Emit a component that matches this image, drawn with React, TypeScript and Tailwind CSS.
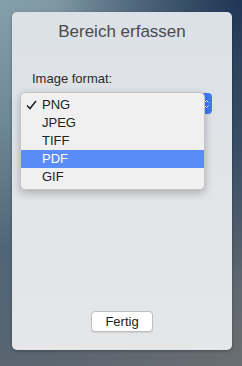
import React from "react";

export default function App() {
  const items = ["PNG", "JPEG", "TIFF", "PDF", "GIF"];
  return (
    <div
      className="w-[242px] h-[366px] overflow-hidden relative bg-[linear-gradient(150deg,#86a0aa_0%,#6e8794_25%,#4f6678_50%,#5a6570_75%,#6a6e72_100%)]"
      style={{ fontFamily: '"Liberation Sans", Arial, sans-serif' }}
    >
      <div className="absolute inset-0 bg-[radial-gradient(ellipse_at_100%_0%,#1f3554_0%,rgba(31,53,84,0)_55%)]" />
      <div className="relative pt-[12px] pl-[12px]">
        <div className="w-[220px] h-[338px] rounded-[5px] bg-[linear-gradient(180deg,#dce1e7_0%,#e2e4e7_50%,#e5e6e8_100%)] flex flex-col items-center shadow-[0_1px_3px_rgba(0,0,0,0.3)]">
          <div className="mt-[10px] text-[17px] leading-[20px] text-[#4a4a4a]">Bereich erfassen</div>
          <div className="self-start ml-[20px] mt-[29px] text-[13px] leading-[16px] text-[#2a2a2a]">Image format:</div>
          <div className="self-start relative mt-[5px] ml-[8px] w-[192px] h-[98px]">
            <div className="absolute right-0 top-[1px] w-[12px] h-[21px] rounded-r-[4px] bg-[#3f7cf2] flex flex-col items-center justify-center gap-[2px]">
              <svg width="5" height="3" viewBox="0 0 5 3"><path d="M0.5 2.5 L2.5 0.5 L4.5 2.5" stroke="white" strokeWidth="1" fill="none" /></svg>
              <svg width="5" height="3" viewBox="0 0 5 3"><path d="M0.5 0.5 L2.5 2.5 L4.5 0.5" stroke="white" strokeWidth="1" fill="none" /></svg>
            </div>
            <div className="absolute left-0 top-0 w-[185px] h-[98px] rounded-[5px] bg-[#f0f0f0] border border-[#c4c4c4] shadow-[0_3px_8px_rgba(0,0,0,0.25)] py-[3px]">
              {items.map((it) => (
                <div
                  key={it}
                  className={
                    "h-[18px] flex items-center text-[13px] " +
                    (it === "PDF" ? "bg-[#5a8cf8] text-white" : "text-[#222222]")
                  }
                >
                  <div className="w-[21px] flex justify-start pl-[5px]">
                    {it === "PNG" ? (
                      <svg width="11" height="10" viewBox="0 0 11 10">
                        <path d="M1 5.5 L4 8.5 L10 1" stroke="#222" strokeWidth="1.6" fill="none" />
                      </svg>
                    ) : null}
                  </div>
                  <span>{it}</span>
                </div>
              ))}
            </div>
          </div>
          <div className="flex-1" />
          <div className="mb-[18px] w-[62px] h-[21px] rounded-[4px] bg-white border border-[#bfbfbf] shadow-[0_1px_1px_rgba(0,0,0,0.1)] flex items-center justify-center text-[13px] text-[#222222]">
            Fertig
          </div>
        </div>
      </div>
    </div>
  );
}
